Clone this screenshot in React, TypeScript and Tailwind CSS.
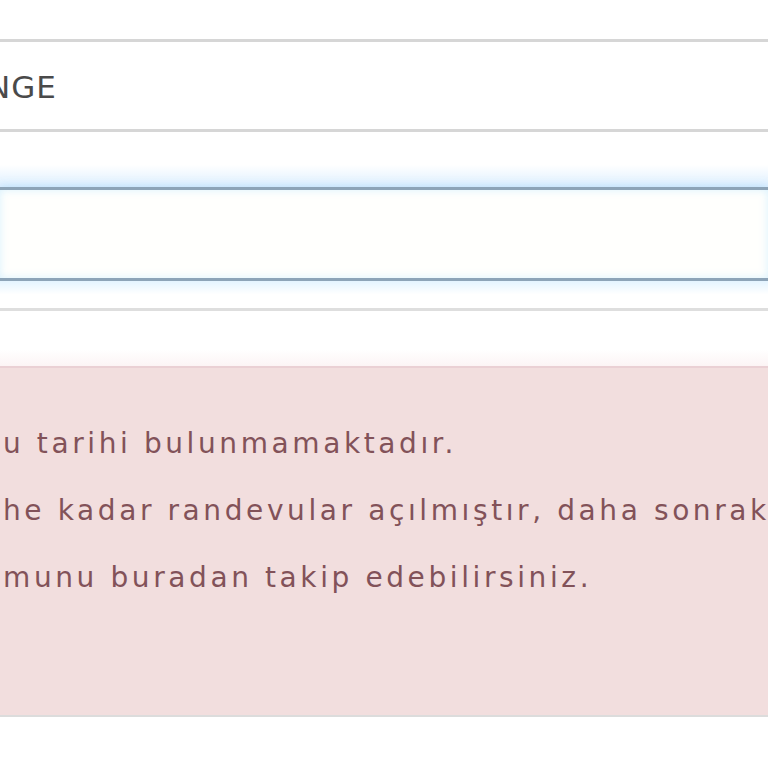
const textFont = { fontFamily: '"DejaVu Sans", "Noto Sans", sans-serif' };

function FieldRow({ children }: { children?: React.ReactNode }) {
  return (
    <div className="h-[93px] border-y-[3px] border-[#d6d6d6] bg-white flex items-center overflow-hidden">
      {children}
    </div>
  );
}

export default function App() {
  return (
    <main className="w-[768px] h-[768px] bg-white overflow-hidden" style={textFont}>
      <section className="pt-[39px]">
        <FieldRow>
          <span className="-ml-[13px] pt-[3px] text-[31px] leading-none tracking-[1px] text-[#4a4a4a]">
            NGE
          </span>
        </FieldRow>

        <div className="h-[55px] bg-gradient-to-b from-white from-60% to-[#ddefff]" />

        <div className="h-[94px] border-y-[3px] border-[#8da4b8] bg-[#fffffd] shadow-[0_0_9px_rgba(120,190,240,0.35),inset_0_0_9px_rgba(170,225,255,0.45)]" />

        <div className="h-[27px] bg-gradient-to-b from-[#e4f4ff] via-white to-white" />

        <div className="h-[58px] border-t-[3px] border-[#dedede] bg-gradient-to-b from-white from-70% to-[#fcf4f5]" />
      </section>

      <section className="h-[351px] border-t-2 border-[#ead0d4] border-b-2 border-b-[#dcdcdc] bg-[#f2dede] pt-[42px] pl-[3px] text-[28px] leading-[67px] tracking-[3.6px] text-[#825259] whitespace-nowrap">
        <p>u tarihi bulunmamaktadır.</p>
        <p>he kadar randevular açılmıştır, daha sonraki</p>
        <p>munu buradan takip edebilirsiniz.</p>
      </section>
    </main>
  );
}
